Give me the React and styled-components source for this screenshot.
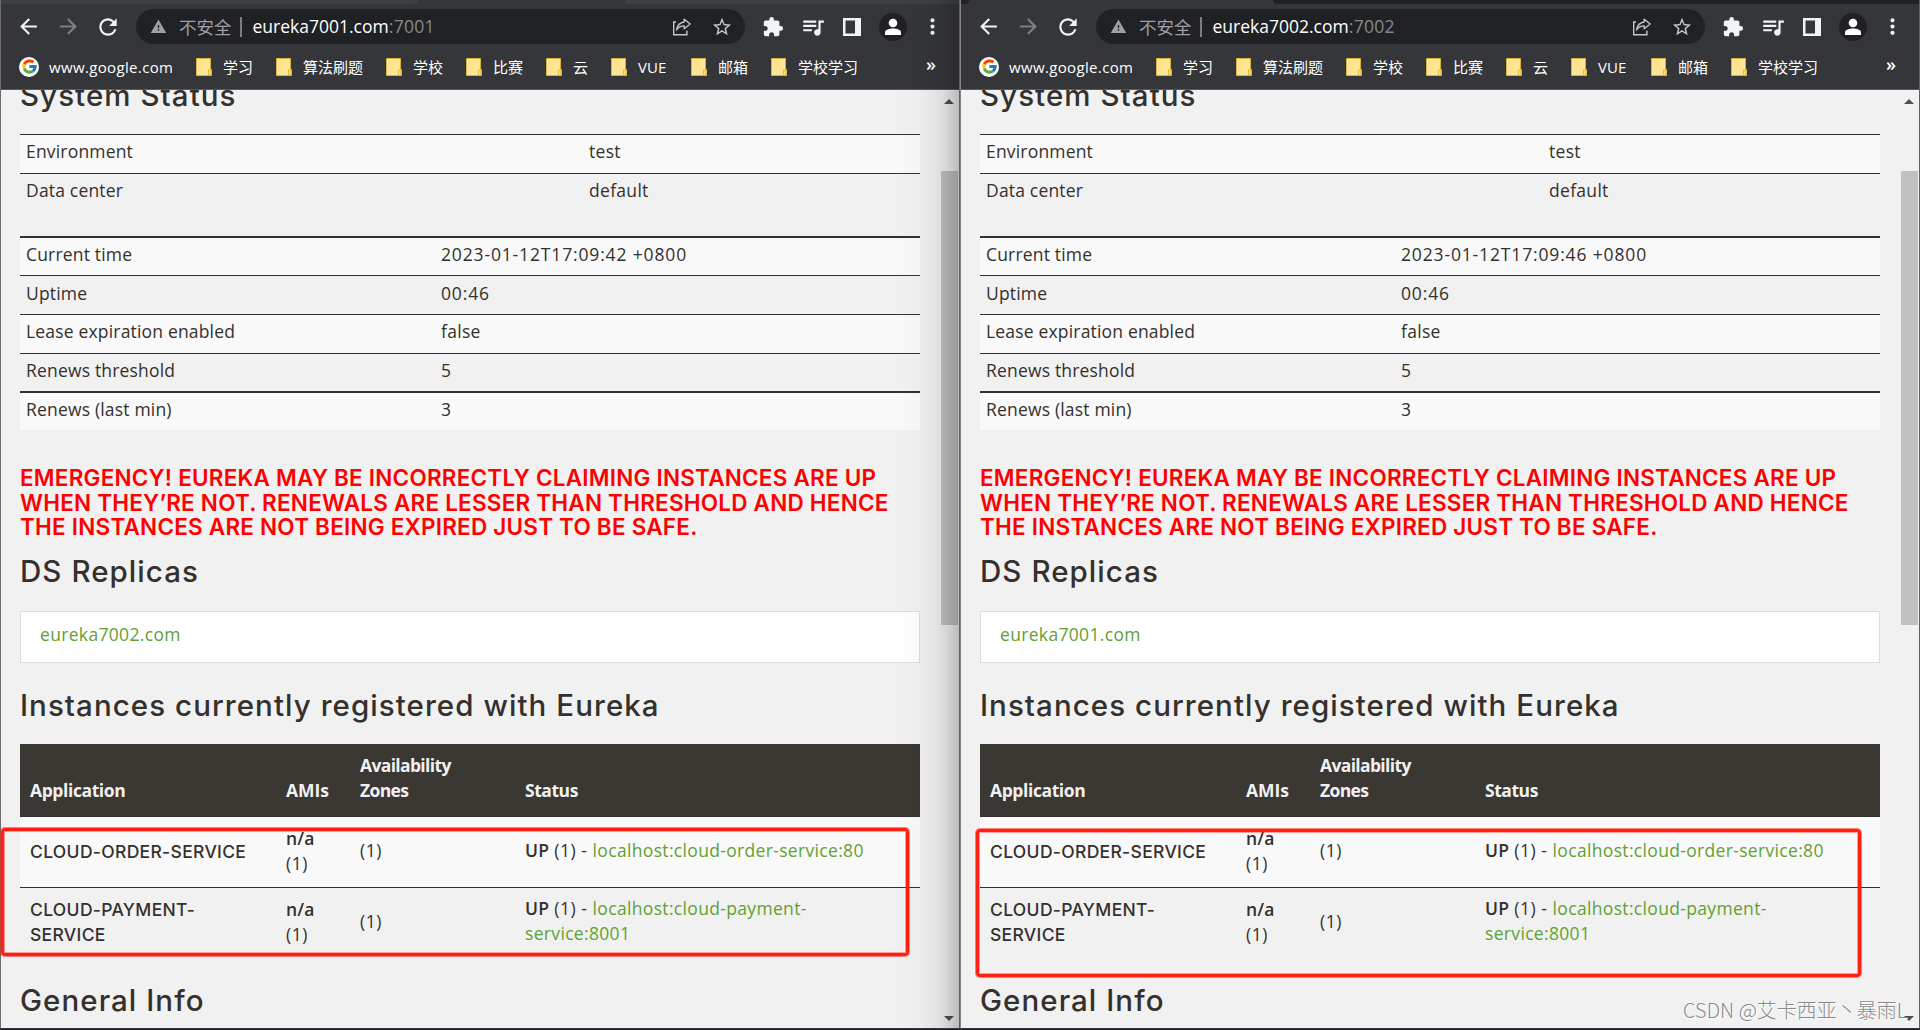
import React from 'react';

import styled, { createGlobalStyle } from 'styled-components';
import {
    MdArrowBack,
    MdArrowForward,
    MdRefresh,
    MdWarning,
    MdStarBorder,
    MdExtension,
    MdQueueMusic,
    MdMoreVert,
} from 'react-icons/md';
import { FcGoogle } from 'react-icons/fc';

const GlobalStyle = createGlobalStyle`
    * {
        box-sizing: border-box;
    }

    body {
        margin: 0;
        background: #1d1a20;
        overflow: hidden;
    }
`;

const uiFont = `'Open Sans', 'Noto Sans CJK SC', sans-serif`;
const bodyFont = `'Open Sans', 'Noto Sans', sans-serif`;
const headFont = `Inter, 'Noto Sans', sans-serif`;

const bookmarks = [
    { label: '学习', width: 30 },
    { label: '算法刷题', width: 60 },
    { label: '学校', width: 30 },
    { label: '比赛', width: 30 },
    { label: '云', width: 15 },
    { label: 'VUE', width: 30 },
    { label: '邮箱', width: 30 },
    { label: '学校学习', width: 60 },
];

const heads = [
    { label: 'Application', spacing: -0.4 },
    { label: 'AMIs', spacing: 0 },
    { label: 'Availability\nZones', spacing: -0.65 },
    { label: 'Status', spacing: -0.45 },
];

const instances = [
    { app: 'CLOUD-ORDER-SERVICE', link: 'localhost:cloud-order-service:80' },
    { app: 'CLOUD-PAYMENT-\nSERVICE', link: 'localhost:cloud-payment-\nservice:8001' },
];

const windows = [
    { port: '7001', replica: '7002', time: '2023-01-12T17:09:42 +0800', shaded: true },
    { port: '7002', replica: '7001', time: '2023-01-12T17:09:46 +0800', shaded: false },
];

/* ---------- desktop and windows ---------- */

const Desktop = styled.div`
    position: relative;
    display: flex;
    width: 1920px;
    height: 1030px;
    overflow: hidden;
`;

const Window = styled.section`
    position: relative;
    display: flex;
    flex-direction: column;
    width: 960px;
    height: 1029px;
    border-left: 1px solid ${(p) => (p.$shaded ? '#6c6c6e' : '#858587')};
    border-right: 1px solid #606062;
    border-bottom: 1px solid #3a373c;
    overflow: hidden;
`;

const WindowShade = styled.div`
    position: absolute;
    top: 0;
    right: 0;
    bottom: 0;
    width: 62px;
    background: linear-gradient(to right, rgba(0, 0, 0, 0), rgba(0, 0, 0, 0.02) 40%, rgba(0, 0, 0, 0.08) 72%, rgba(0, 0, 0, 0.22));
`;

const TabStrip = styled.div`
    display: flex;
    flex: none;
    height: 4px;
    background: #35363a;
`;

const TabEdge = styled.div`
    width: ${(p) => p.$width}px;
    margin-left: ${(p) => p.$gap || 0}px;
    background: ${(p) => p.$color};
    border-radius: ${(p) => p.$radius};
`;

/* ---------- browser toolbar ---------- */

const Toolbar = styled.div`
    display: flex;
    flex: none;
    align-items: center;
    height: 45px;
    padding-left: 7px;
    background: #35363a;
`;

const ToolButton = styled.div`
    display: flex;
    flex: none;
    align-items: center;
    justify-content: center;
    width: ${(p) => p.$width || 40}px;
    height: 35px;
    color: ${(p) => (p.$dim ? '#7d7f82' : '#f1f3f4')};
`;

const Omnibox = styled.div`
    display: flex;
    align-items: center;
    width: 609px;
    height: 35px;
    margin: 0 8px;
    padding: 0 12px 0 14px;
    border-radius: 18px;
    background: #202124;
    color: #9aa0a6;
    font: 17.5px/35px ${uiFont};
    white-space: nowrap;
`;

const Insecure = styled.span`
    margin-left: 12px;
    font-family: 'Noto Sans CJK SC', sans-serif;
`;

const Separator = styled.span`
    width: 2px;
    height: 20px;
    margin: 0 11px 0 8px;
    background: #7b7f84;
`;

const Host = styled.span`
    color: #fff;
`;

const Port = styled.span`
    color: #86898d;
    letter-spacing: 0.3px;
`;

const OmniActions = styled.div`
    display: flex;
    align-items: center;
    gap: 19px;
    margin-left: auto;
    color: #c4c6c9;
`;

const Avatar = styled.div`
    display: flex;
    align-items: center;
    justify-content: center;
    width: 28px;
    height: 28px;
    border-radius: 50%;
    background: #202124;
`;

const BookmarkBar = styled.div`
    display: flex;
    flex: none;
    align-items: center;
    height: 41px;
    padding: 0 23px 5px 18px;
    background: #35363a;
    border-bottom: 1px solid #5d595f;
    color: #fff;
    font: 15px/20px ${uiFont};
    white-space: nowrap;
`;

const GoogleMark = styled.div`
    display: flex;
    align-items: center;
    justify-content: center;
    width: 20px;
    height: 20px;
    border-radius: 50%;
    background: #fff;
`;

const GoogleLabel = styled.span`
    width: 147px;
    margin-left: 10px;
    letter-spacing: 0.35px;
`;

const Bookmark = styled.div`
    display: flex;
    align-items: center;
    gap: 11px;
    margin-right: 23px;

    span {
        width: ${(p) => p.$width}px;
    }
`;

const More = styled.span`
    margin-left: auto;
    font-size: 18px;
    font-weight: 600;
    padding-bottom: 5px;
`;

/* ---------- eureka page ---------- */

const Viewport = styled.div`
    display: flex;
    flex: 1;
    min-height: 0;
    overflow: hidden;
    background: #f1f1f1;
    color: #34302d;
    font: 17.5px/25px ${bodyFont};
    letter-spacing: 0.18px;
`;

const Page = styled.main`
    width: 900px;
    margin: -11px 21px 0 19px;
`;

const Title = styled.h1`
    height: 33px;
    margin: ${(p) => p.$top || 0}px 0 ${(p) => p.$bottom || 0}px;
    font: 500 29.5px/33px ${headFont};
    letter-spacing: 1.06px;
    white-space: nowrap;
`;

const InfoTable = styled.div`
    height: ${(p) => p.$height}px;
`;

const InfoRow = styled.div`
    display: grid;
    grid-template-columns: ${(p) => p.$split}px 1fr;
    height: ${(p) => p.$height || 39}px;
    padding: ${(p) => p.$pad || 4}px 0 0 6px;
    border-top: ${(p) => (p.$thick ? 2 : 1)}px solid #34302d;
    background: ${(p) => (p.$striped ? '#f9f9f9' : 'transparent')};
`;

const InfoValue = styled.span`
    letter-spacing: ${(p) => (p.$numeric ? 0.85 : 0.3)}px;
`;

const Emergency = styled.h4`
    margin: 36px 0 15px;
    color: #ff0000;
    font: 600 22.5px/24.7px ${headFont};
    letter-spacing: 0.22px;
    white-space: nowrap;

    span {
        display: block;
    }
`;

const Replica = styled.div`
    height: 52px;
    padding: 10px 19px;
    border: 1px solid #ddd;
    background: #fff;
`;

const Link = styled.a`
    color: #5fa134;
    letter-spacing: 0.33px;
    text-decoration: none;
`;

const columns = '256px 74px 165px 1fr';

const InstanceHead = styled.div`
    display: grid;
    grid-template-columns: ${columns};
    align-items: end;
    height: 73px;
    padding: 0 0 13px 10px;
    border-bottom: 1px solid #34302d;
    background: #3b3733;
    color: #f1f1f1;
    font-weight: 700;
    white-space: pre-line;
`;

const HeadCell = styled.span`
    letter-spacing: ${(p) => p.$spacing}px;
`;

const InstanceRow = styled.div`
    display: grid;
    grid-template-columns: ${columns};
    align-items: center;
    height: ${(p) => (p.$striped ? 71 : 68)}px;
    padding: 9px 0 ${(p) => (p.$striped ? 13 : 9)}px 10px;
    border-bottom: ${(p) => (p.$striped ? '1px solid #34302d' : 'none')};
    background: ${(p) => (p.$striped ? '#f9f9f9' : 'transparent')};
    letter-spacing: 0.55px;
    white-space: pre-line;

    b {
        font-weight: 600;
        letter-spacing: 0.2px;
    }
`;

const Cell = styled.span`
    margin-top: -2px;
`;

const AppName = styled.span`
    font: 500 17.5px/25px ${headFont};
    letter-spacing: 0.32px;
`;

const ScrollTrack = styled.div`
    display: flex;
    flex-direction: column;
    align-items: center;
    width: 17px;
    height: 938px;
    padding: 9px 0 7px;
`;

const ScrollArrow = styled.i`
    border: 5px solid transparent;
    border-top: ${(p) => (p.$up ? '0' : '5px solid #505050')};
    border-bottom: ${(p) => (p.$up ? '5px solid #505050' : '0')};
    margin-top: ${(p) => (p.$up ? 0 : 'auto')};
    margin-right: 1px;
`;

const ScrollThumb = styled.div`
    width: 17px;
    height: 454px;
    margin-top: 67px;
    background: #c1c1c1;
`;

/* ---------- annotations over both windows ---------- */

const Marker = styled.div`
    position: absolute;
    left: ${(p) => p.$x}px;
    top: ${(p) => p.$y}px;
    width: ${(p) => p.$w}px;
    height: ${(p) => p.$h}px;
    border: 3px solid #ff2012;
    border-radius: 4px;
    box-shadow: 0 0 0 1px rgba(255, 32, 18, 0.55), inset 0 0 0 1px rgba(255, 32, 18, 0.4);
`;

const Watermark = styled.div`
    position: absolute;
    left: 1683px;
    top: 996px;
    color: #8a8a8a;
    font: 300 20px/28px 'Noto Sans CJK SC', sans-serif;
    text-shadow: 1px 1px 0 #fff;
    white-space: nowrap;
`;

const ShareIcon = () => (
    <svg width="20" height="20" viewBox="0 0 20 20" fill="none" stroke="currentColor" strokeWidth="1.4">
        <path d="M4 5H1.7v12.8h13.2v-4.2" />
        <path d="M12.2 2.2 18.2 7l-6 4.8V8.9C8.6 8.9 6.3 10 4.6 12.8 5.2 8.4 7.6 5.6 12.2 5z" strokeLinejoin="round" />
    </svg>
);

const PanelIcon = () => (
    <svg width="18" height="18" viewBox="0 0 18 18">
        <path fillRule="evenodd" fill="currentColor" d="M0 0h18v18H0zM2.5 2.5v13H12v-13z" />
    </svg>
);

const PersonIcon = () => (
    <svg width="18" height="18" viewBox="0 0 18 18" fill="#fff">
        <circle cx="9" cy="5" r="4.3" />
        <path d="M1 17v-2.5c0-3 4.5-4 8-4s8 1 8 4V17z" />
    </svg>
);

const FolderIcon = () => (
    <svg width="16" height="18" viewBox="0 0 16 18">
        <path d="M0.5 0.5h14v11h1v6h-15z" fill="#ffe591" stroke="#d9b53c" />
        <path d="M12.5 17v-5h2.5v5z" fill="#ffe591" stroke="#e0b93a" />
    </svg>
);

const Browser = ({ port, replica, time, shaded }) => {
    const status = [
        ['Current time', time],
        ['Uptime', '00:46'],
        ['Lease expiration enabled', 'false'],
        ['Renews threshold', '5'],
        ['Renews (last min)', '3'],
    ];

    return (
        <Window $shaded={shaded}>
            {shaded ? (
                <TabStrip>
                    <TabEdge $width={417} $color="#3d4144" $radius="0 0 8px 0" />
                    <TabEdge $width={334} $gap={207} $color="#3d4144" $radius="0 0 0 8px" />
                </TabStrip>
            ) : (
                <TabStrip>
                    <TabEdge $width={8} $color="#202124" $radius="0 0 8px 0" />
                    <TabEdge $width={646} $gap={304} $color="#202124" $radius="0 0 0 8px" />
                </TabStrip>
            )}

            <Toolbar>
                <ToolButton><MdArrowBack size={25} /></ToolButton>
                <ToolButton $dim><MdArrowForward size={25} /></ToolButton>
                <ToolButton><MdRefresh size={26} /></ToolButton>
                <Omnibox>
                    <MdWarning size={17} />
                    <Insecure>不安全</Insecure>
                    <Separator />
                    <Host>eureka{port}.com</Host>
                    <Port>:{port}</Port>
                    <OmniActions>
                        <ShareIcon />
                        <MdStarBorder size={22} />
                    </OmniActions>
                </Omnibox>
                <ToolButton><MdExtension size={22} /></ToolButton>
                <ToolButton $width={39}><MdQueueMusic size={26} /></ToolButton>
                <ToolButton><PanelIcon /></ToolButton>
                <ToolButton $width={41}><Avatar><PersonIcon /></Avatar></ToolButton>
                <ToolButton $width={38}><MdMoreVert size={25} /></ToolButton>
            </Toolbar>

            <BookmarkBar>
                <GoogleMark><FcGoogle size={17} /></GoogleMark>
                <GoogleLabel>www.google.com</GoogleLabel>
                {bookmarks.map((v) => (
                    <Bookmark key={v.label} $width={v.width}>
                        <FolderIcon />
                        <span>{v.label}</span>
                    </Bookmark>
                ))}
                <More>»</More>
            </BookmarkBar>

            <Viewport>
                <Page>
                    <Title $bottom={22}>System Status</Title>
                    <InfoTable $height={102}>
                        <InfoRow $split={563} $striped>
                            <span>Environment</span>
                            <InfoValue>test</InfoValue>
                        </InfoRow>
                        <InfoRow $split={563}>
                            <span>Data center</span>
                            <InfoValue>default</InfoValue>
                        </InfoRow>
                    </InfoTable>
                    <InfoTable $height={194}>
                        {status.map(([label, value], i) => (
                            <InfoRow
                                key={label}
                                $split={415}
                                $striped={i % 2 === 0}
                                $thick={i === 0 || i === 4}
                                $height={i === 3 ? 38 : 39}
                                $pad={i === 1 ? 5 : 4}
                            >
                                <span>{label}</span>
                                <InfoValue $numeric={i < 2}>{value}</InfoValue>
                            </InfoRow>
                        ))}
                    </InfoTable>

                    <Emergency>
                        <span>EMERGENCY! EUREKA MAY BE INCORRECTLY CLAIMING INSTANCES ARE UP</span>
                        <span>WHEN THEY’RE NOT. RENEWALS ARE LESSER THAN THRESHOLD AND HENCE</span>
                        <span>THE INSTANCES ARE NOT BEING EXPIRED JUST TO BE SAFE.</span>
                    </Emergency>

                    <Title $bottom={23}>DS Replicas</Title>
                    <Replica>
                        <Link>eureka{replica}.com</Link>
                    </Replica>

                    <Title $top={26} $bottom={22}>Instances currently registered with Eureka</Title>
                    <InstanceHead>
                        {heads.map((v) => (
                            <HeadCell key={v.label} $spacing={v.spacing}>{v.label}</HeadCell>
                        ))}
                    </InstanceHead>
                    {instances.map((v, i) => (
                        <InstanceRow key={v.app} $striped={i === 0}>
                            <AppName>{v.app}</AppName>
                            <span><b>n/a</b>{'\n(1)'}</span>
                            <Cell>(1)</Cell>
                            <Cell><b>UP</b> (1) - <Link>{v.link}</Link></Cell>
                        </InstanceRow>
                    ))}

                    <Title $top={28}>General Info</Title>
                </Page>
                <ScrollTrack>
                    <ScrollArrow $up />
                    <ScrollThumb />
                    <ScrollArrow />
                </ScrollTrack>
            </Viewport>
            {shaded && <WindowShade />}
        </Window>
    );
};

const App = () => (
    <>
        <GlobalStyle />
        <Desktop>
            {windows.map((v) => (
                <Browser key={v.port} {...v} />
            ))}
            <Marker $x={1} $y={828} $w={908} $h={128} />
            <Marker $x={976} $y={829} $w={885} $h={148} />
            <Watermark>CSDN @艾卡西亚丶暴雨L</Watermark>
        </Desktop>
    </>
);

export default App;
